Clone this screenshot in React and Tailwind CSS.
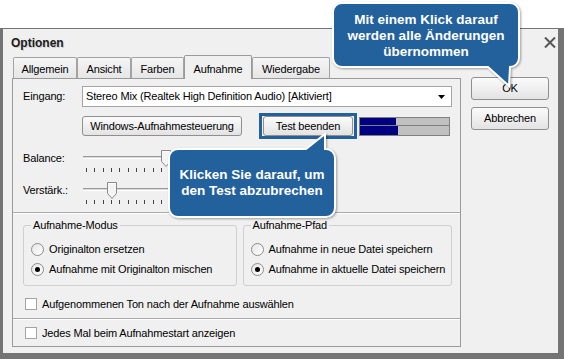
import React from "react";

const font = "font-[family-name:'Liberation_Sans',Arial,sans-serif]";

const Btn = ({ children, className = "" }) => (
  <div
    className={`flex items-center justify-center border border-[#8f8f8f] rounded-[3px] bg-linear-to-b from-[#fbfbfb] to-[#e3e3e3] text-[11px] text-black whitespace-nowrap ${className}`}
  >
    {children}
  </div>
);

const Ticks = () => (
  <div className="flex justify-between w-[159px] ml-[3px]">
    {Array.from({ length: 20 }).map((_, i) => (
      <span key={i} className="w-px h-[4px] bg-[#444]" />
    ))}
  </div>
);

const Thumb = ({ className }) => (
  <svg width="10" height="17" viewBox="0 0 10 17" className={`absolute top-0 ${className}`}>
    <path d="M0.5 0.5 H9.5 V11.5 L5 16.5 L0.5 11.5 Z" fill="#f4f4f4" stroke="#8a8a8a" />
    <path d="M1.5 1.5 H8.5" stroke="#ffffff" />
  </svg>
);

const SliderRow = ({ label, thumb, className = "" }) => (
  <div className={`flex ${className}`}>
    <div className="w-[60px] h-[16px] flex items-center text-[11px]">{label}</div>
    <div className="relative w-[166px] h-[22px]">
      <div className="mt-[6px] h-[3px] border-t border-[#9a9a9a] border-b border-b-white bg-[#d8d8d8]" />
      <div className="mt-[9px]">
        <Ticks />
      </div>
      <Thumb className={thumb} />
    </div>
  </div>
);

const Radio = ({ checked, label }) => (
  <div className="flex items-center h-[13px] text-[11px] whitespace-nowrap">
    <span className="shrink-0 w-[13px] h-[13px] rounded-full border border-[#8c8c8c] bg-linear-to-br from-[#e6e6e6] to-white flex items-center justify-center">
      {checked && <span className="w-[5px] h-[5px] rounded-full bg-black" />}
    </span>
    <span className="ml-[5px]">{label}</span>
  </div>
);

const Check = ({ label, className = "" }) => (
  <div className={`flex items-center h-[12px] text-[11px] ${className}`}>
    <span className="w-[12px] h-[12px] border border-[#a3a3a3] bg-white" />
    <span className="ml-[5px]">{label}</span>
  </div>
);

const Group = ({ title, children, className = "" }) => (
  <fieldset className={`border border-[#cfcfcf] rounded-[3px] h-[68px] ${className}`}>
    <legend className="ml-[7px] px-[2px] text-[11px] leading-[14px]">{title}</legend>
    <div className="pl-[7px] pt-[11px] flex flex-col gap-[7px]">{children}</div>
  </fieldset>
);

const Separator = ({ className = "" }) => (
  <div className={`h-[2px] border-t border-[#a9a9a9] border-b border-b-white ${className}`} />
);

const tabs = [
  { name: "Allgemein", w: "w-[64px]" },
  { name: "Ansicht", w: "w-[54px]" },
  { name: "Farben", w: "w-[53px]" },
  { name: "Aufnahme", w: "w-[68px]", active: true },
  { name: "Wiedergabe", w: "w-[78px]" },
];

export default function App() {
  return (
    <div className={`relative w-[564px] h-[359px] bg-white overflow-hidden text-black tracking-[-0.15px] ${font}`}>
      <div className="h-[28px]" />

      {/* dialog window */}
      <div className="h-[331px] border-t border-l-[3px] border-r-[6px] border-b-[6px] border-[#747474] bg-[#f0f0f0] flex flex-col">
        <div className="h-[27px] flex items-center justify-between pl-[8px] pr-[2px]">
          <span className="text-[12px] font-bold tracking-normal text-[#1b1b1b] [text-shadow:1px_1px_0_#d0d0d0]">Optionen</span>
          <svg width="12" height="11" viewBox="0 0 12 11">
            <path d="M1 0.5 L11 10.5 M11 0.5 L1 10.5" stroke="#555555" strokeWidth="2" />
          </svg>
        </div>

        <div className="flex pl-[9px]">
          {/* tabs + panel */}
          <div className="w-[449px]">
            <div className="flex items-end h-[22px] pl-[1px]">
              {tabs.map((t) =>
                t.active ? (
                  <div
                    key={t.name}
                    className={`${t.w} h-[24px] -mb-px relative z-10 border border-b-0 border-[#9a9a9a] rounded-t-[2px] bg-[#f0f0f0] flex items-start justify-center pt-[5px] text-[11px]`}
                  >
                    {t.name}
                  </div>
                ) : (
                  <div
                    key={t.name}
                    className={`${t.w} h-[21px] border border-b-0 border-[#a3a3a3] rounded-t-[2px] bg-linear-to-b from-[#f5f5f5] to-[#e6e6e6] flex items-center justify-center pt-[2px] text-[11px]`}
                  >
                    {t.name}
                  </div>
                )
              )}
            </div>

            <div className="h-[269px] border border-[#9a9a9a] bg-[#f0f0f0] pt-[7px] pl-[10px] pr-[8px]">
              <div className="flex items-center h-[21px]">
                <div className="w-[59px] text-[11px]">Eingang:</div>
                <div className="w-[370px] h-[21px] border border-[#a5a5a5] bg-white flex items-center justify-between pl-[3px] pr-[5px] text-[11px]">
                  <span>Stereo Mix (Realtek High Definition Audio) [Aktiviert]</span>
                  <svg width="8" height="4" viewBox="0 0 8 4">
                    <path d="M0 0 H7 L3.5 4 Z" fill="#000" />
                  </svg>
                </div>
              </div>

              <div className="flex items-center h-[26px] mt-[6px] ml-[59px]">
                <Btn className="w-[160px] h-[20px]">Windows-Aufnahmesteuerung</Btn>
                <div className="ml-[17px] h-[26px] border-[3px] border-[#23619c] px-px">
                  <Btn className="w-[90px] h-[20px]">Test beenden</Btn>
                </div>
                <div className="ml-[2px] w-[91px] h-[19px] border border-[#808080] flex flex-col">
                  <div className="h-[8px] bg-[#c0c0c0] border-b border-[#808080]">
                    <div className="w-[36px] h-full bg-[#000080]" />
                  </div>
                  <div className="flex-1 bg-[#c0c0c0]">
                    <div className="w-[38px] h-full bg-[#000080]" />
                  </div>
                </div>
              </div>

              <SliderRow label="Balance:" thumb="left-[78px]" className="mt-[11px]" />
              <SliderRow label="Verstärk.:" thumb="left-[24px]" className="mt-[10px]" />

              <Separator className="mt-[8px] -ml-[10px] -mr-[8px]" />

              <div className="flex mt-[4px]">
                <Group title="Aufnahme-Modus" className="w-[214px]">
                  <Radio label="Originalton ersetzen" />
                  <Radio checked label="Aufnahme mit Originalton mischen" />
                </Group>
                <Group title="Aufnahme-Pfad" className="w-[210px] ml-[6px]">
                  <Radio label="Aufnahme in neue Datei speichern" />
                  <Radio checked label="Aufnahme in aktuelle Datei speichern" />
                </Group>
              </div>

              <Check label="Aufgenommenen Ton nach der Aufnahme auswählen" className="mt-[12px] ml-[2px]" />
              <Separator className="mt-[8px] -ml-[10px] -mr-[8px]" />
              <Check label="Jedes Mal beim Aufnahmestart anzeigen" className="mt-[7px] ml-[2px]" />
            </div>
          </div>

          {/* dialog buttons */}
          <div className="ml-[10px] pt-[21px] flex flex-col gap-[7px]">
            <Btn className="w-[78px] h-[23px]">OK</Btn>
            <Btn className="w-[78px] h-[23px]">Abbrechen</Btn>
          </div>
        </div>
      </div>

      {/* callout: OK */}
      <div className="absolute left-[332px] top-[2px] w-[190px] h-[88px] tracking-normal">
        <svg width="190" height="88" viewBox="0 0 190 88" className="absolute inset-0 drop-shadow-[1px_1px_1px_rgba(0,0,0,0.35)]">
          <path
            d="M10 1 H178 A9 9 0 0 1 187 10 V56 A9 9 0 0 1 178 65 L177 84 L156 65 H10 A9 9 0 0 1 1 56 V10 A9 9 0 0 1 10 1 Z"
            fill="#23619c"
            stroke="#ffffff"
            strokeWidth="2"
          />
        </svg>
        <div className="absolute left-0 top-[10px] w-[188px] text-center text-white font-bold text-[13.5px] leading-[16px]">
          Mit einem Klick darauf
          <br />
          werden alle Änderungen
          <br />
          übernommen
        </div>
      </div>

      {/* callout: Test beenden */}
      <div className="absolute left-[167px] top-[132px] w-[172px] h-[88px] tracking-normal">
        <svg width="172" height="88" viewBox="0 0 172 88" className="absolute inset-0 drop-shadow-[1px_1px_1px_rgba(0,0,0,0.35)]">
          <path
            d="M11 17 H139 L158 2 V17 H159 A9 9 0 0 1 168 26 V76 A9 9 0 0 1 159 85 H11 A9 9 0 0 1 2 76 V26 A9 9 0 0 1 11 17 Z"
            fill="#23619c"
            stroke="#ffffff"
            strokeWidth="2"
          />
        </svg>
        <div className="absolute left-[2px] top-[35px] w-[166px] text-center text-white font-bold text-[13.5px] leading-[16px]">
          Klicken Sie darauf, um
          <br />
          den Test abzubrechen
        </div>
      </div>
    </div>
  );
}
